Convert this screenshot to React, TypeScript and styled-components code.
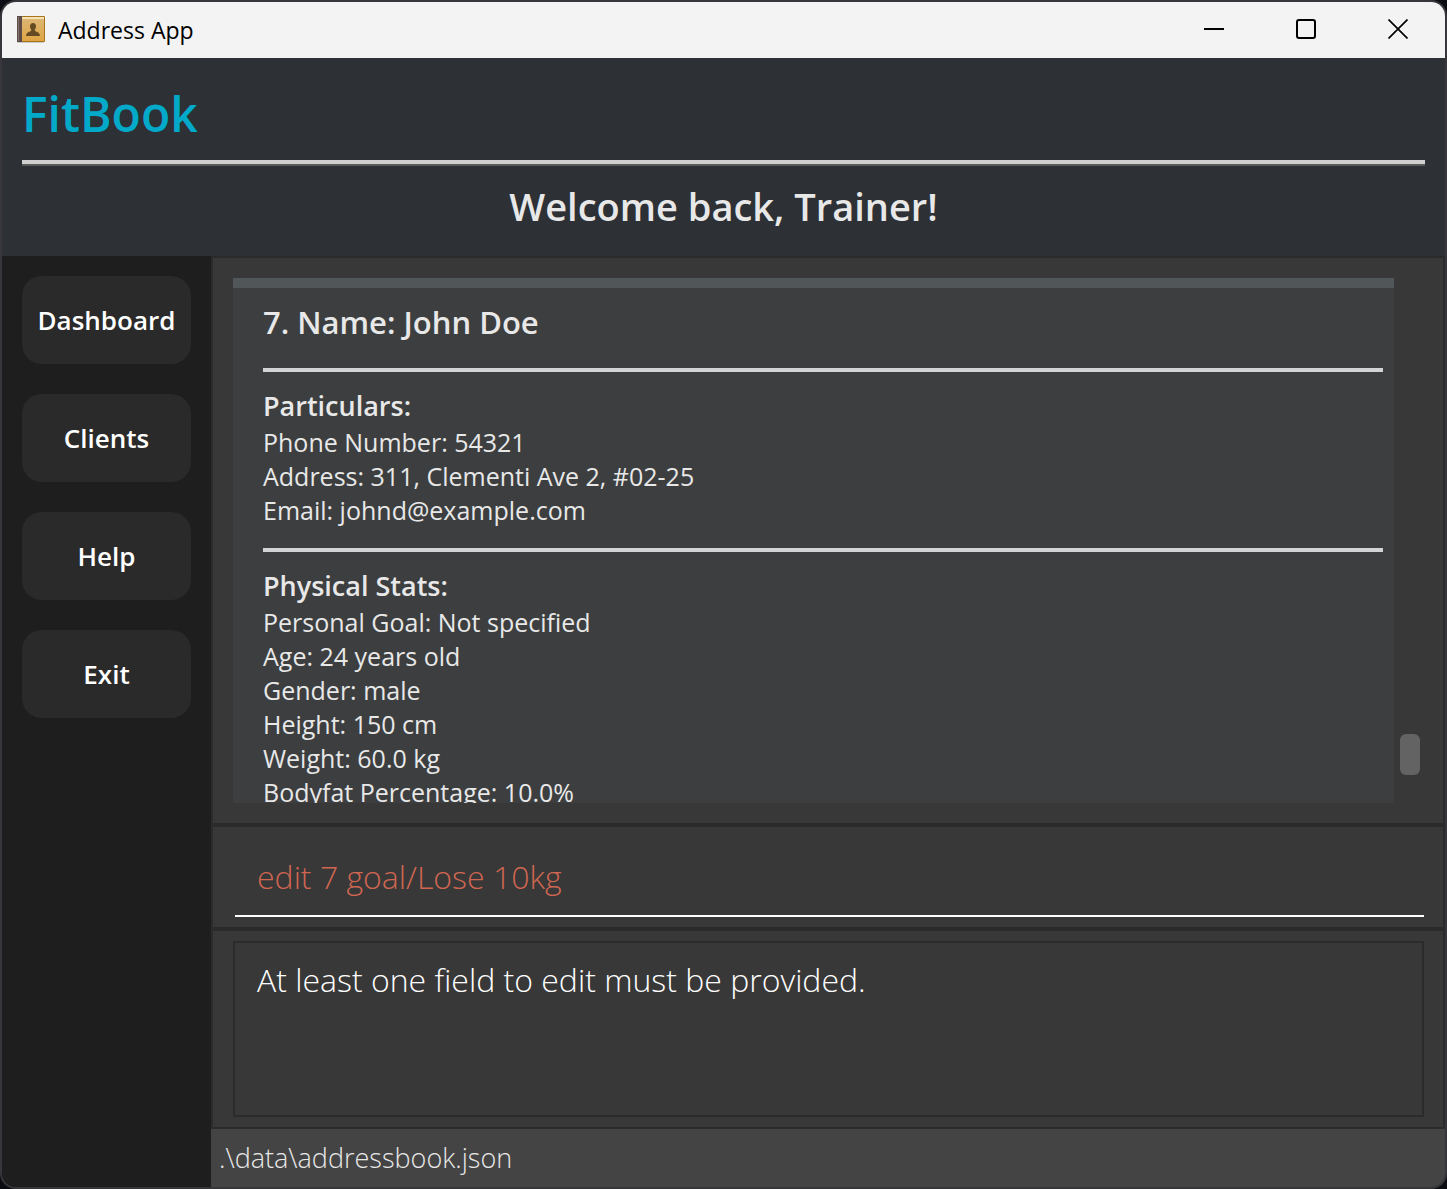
import React, { useState } from "react";
import styled, { createGlobalStyle } from "styled-components";

const GlobalStyle = createGlobalStyle`
  *, *::before, *::after { box-sizing: border-box; }
  body {
    margin: 0;
    background: #0b0d12;
    font-family: "Open Sans", "Noto Sans", sans-serif;
    color: #e8e8e8;
  }
  h1, h2, h3, h4, p, ul { margin: 0; padding: 0; font-weight: 400; }
`;

const Window = styled.div`
  display: flex;
  flex-direction: column;
  height: 100vh;
  min-height: 720px;
  border: 2px solid #37373b;
  border-radius: 16px;
  overflow: hidden;
  background: #1e1e1e;
`;

const TitleBar = styled.header`
  display: flex;
  align-items: center;
  flex: none;
  height: 56px;
  padding: 0 1px 0 14px;
  gap: 12px;
  background: #f3f3f3;
  color: #000;
`;

const AppTitle = styled.span`
  flex: 1;
  font-size: 23px;
  line-height: 56px;
`;

const WindowButtons = styled.div`
  display: flex;
`;

const WindowButton = styled.button`
  display: flex;
  align-items: center;
  justify-content: center;
  width: 92px;
  height: 56px;
  padding: 0 0 2px;
  border: 0;
  background: transparent;
  color: #000;
`;

const Hero = styled.section`
  flex: none;
  height: 198px;
  padding: 20px;
  background: #2d3035;
`;

const Brand = styled.h1`
  font-size: 48px;
  font-weight: 600;
  line-height: 72px;
  color: #03a9c9;
`;

const HeroRule = styled.div`
  height: 6px;
  margin-top: 10px;
  background: #d0d0d0;
  border-bottom: 2px solid #5a5a5a;
`;

const Welcome = styled.h2`
  margin-top: 10px;
  font-size: 38px;
  font-weight: 600;
  line-height: 60px;
  text-align: center;
`;

const Body = styled.div`
  display: flex;
  flex: 1;
  min-height: 0;
`;

const Sidebar = styled.nav`
  display: flex;
  flex-direction: column;
  flex: none;
  gap: 30px;
  width: 209px;
  padding: 20px;
  background: #1e1e1e;
`;

const NavButton = styled.button`
  height: 88px;
  padding: 0 0 1px;
  border: 0;
  border-radius: 20px;
  background: #2a2a2a;
  color: #fff;
  font-family: inherit;
  font-size: 26px;
  font-weight: 600;
`;

const Main = styled.main`
  display: flex;
  flex-direction: column;
  flex: 1;
  min-width: 0;
  background: #383838;
`;

const Pane = styled.section<{ $grow?: boolean; $pad: string }>`
  display: flex;
  flex: ${(p) => (p.$grow ? "1" : "none")};
  min-height: 0;
  padding: ${(p) => p.$pad};
  border: 2px solid #2b2b2b;
`;

const ListView = styled.div`
  flex: 1;
  min-width: 0;
  overflow: hidden;
  background: #3c3e3f;
`;

const PreviousCard = styled.div`
  height: 10px;
  background: #515658;
`;

const Card = styled.article`
  padding: 10px 11px 0 30px;
`;

const CardName = styled.h3`
  font-size: 31px;
  font-weight: 600;
  line-height: 49px;
`;

const CardRule = styled.hr`
  height: 4px;
  margin: 21px 0 14px;
  border: 0;
  background: #d3d3d3;
`;

const GroupTitle = styled.h4`
  font-size: 27px;
  font-weight: 600;
  line-height: 39px;
`;

const Field = styled.p`
  font-size: 25px;
  line-height: 34px;
`;

const ScrollBar = styled.div`
  display: flex;
  flex-direction: column;
  justify-content: flex-end;
  flex: none;
  width: 29px;
  padding: 0 3px 28px 6px;
`;

const Thumb = styled.div`
  height: 41px;
  border-radius: 6px;
  background: #636363;
`;

const CommandInput = styled.input`
  flex: 1;
  min-width: 0;
  height: 80px;
  margin: 0 0 0 2px;
  padding: 0 22px;
  border: 0;
  border-bottom: 2px solid #fff;
  outline: none;
  background: transparent;
  color: #d06651;
  font-family: inherit;
  font-size: 32px;
  font-weight: 300;
`;

const Result = styled.output`
  flex: 1;
  height: 176px;
  padding: 12px 22px;
  border: 2px solid #2b2b2b;
  color: #fff;
  font-size: 32px;
  font-weight: 300;
  line-height: 50px;
`;

const StatusBar = styled.footer`
  flex: none;
  height: 58px;
  padding: 0 8px;
  background: #444;
  font-size: 27px;
  font-weight: 300;
  line-height: 58px;
`;

const BookIcon = () => (
  <svg width="30" height="30" viewBox="0 0 30 30" aria-hidden="true">
    <defs>
      <linearGradient id="cover" x1="0" y1="0" x2="0" y2="1">
        <stop offset="0" stopColor="#dcb673" />
        <stop offset="1" stopColor="#e0a545" />
      </linearGradient>
    </defs>
    <rect x="1" y="25" width="27" height="3" rx="1" fill="#c9c9c9" />
    <rect x="1" y="1" width="28" height="26" rx="1" fill="#a8741c" />
    <rect x="2" y="2" width="26" height="2" fill="#f6e3b5" />
    <rect x="6" y="4" width="22" height="22" fill="url(#cover)" />
    <rect x="1" y="1" width="5" height="26" fill="#5d4b48" />
    <rect x="2" y="2" width="1" height="24" fill="#86736d" />
    <path
      d="M17 8c2 0 3 1.300 3 3.200 0 1.600-.6 2.600-1.200 3.400v1.200c.8.900 5.200 1.400 5.200 5.200H10c0-3.800 4.400-4.300 5.200-5.200v-1.200C14.600 13.800 14 12.800 14 11.200 14 9.300 15 8 17 8z"
      fill="#654a25"
    />
  </svg>
);

const particulars = [
  "Phone Number: 54321",
  "Address: 311, Clementi Ave 2, #02-25",
  "Email: johnd@example.com",
];

const stats = [
  "Personal Goal: Not specified",
  "Age: 24 years old",
  "Gender: male",
  "Height: 150 cm",
  "Weight: 60.0 kg",
  "Bodyfat Percentage: 10.0%",
];

export default function App() {
  const [command, setCommand] = useState("edit 7 goal/Lose 10kg");
  return (
    <>
      <GlobalStyle />
      <Window>
        <TitleBar>
          <BookIcon />
          <AppTitle>Address App</AppTitle>
          <WindowButtons>
            <WindowButton aria-label="Minimize">
              <svg width="20" height="20" viewBox="0 0 20 20">
                <path d="M0 10h20" stroke="currentColor" strokeWidth="2" />
              </svg>
            </WindowButton>
            <WindowButton aria-label="Maximize">
              <svg width="20" height="20" viewBox="0 0 20 20">
                <rect x="1" y="1" width="18" height="18" rx="2" fill="none" stroke="currentColor" strokeWidth="2" />
              </svg>
            </WindowButton>
            <WindowButton aria-label="Close">
              <svg width="20" height="20" viewBox="0 0 20 20">
                <path d="M0.500 0.500l19 19M19.500 0.500l-19 19" stroke="currentColor" strokeWidth="1.700" />
              </svg>
            </WindowButton>
          </WindowButtons>
        </TitleBar>
        <Hero>
          <Brand>FitBook</Brand>
          <HeroRule />
          <Welcome>Welcome back, Trainer!</Welcome>
        </Hero>
        <Body>
          <Sidebar>
            {["Dashboard", "Clients", "Help", "Exit"].map((label) => (
              <NavButton key={label}>{label}</NavButton>
            ))}
          </Sidebar>
          <Main>
            <Pane $grow $pad="20px">
              <ListView>
                <PreviousCard />
                <Card>
                  <CardName>7. Name: John Doe</CardName>
                  <CardRule />
                  <GroupTitle>Particulars:</GroupTitle>
                  {particulars.map((line) => (
                    <Field key={line}>{line}</Field>
                  ))}
                  <CardRule />
                  <GroupTitle>Physical Stats:</GroupTitle>
                  {stats.map((line) => (
                    <Field key={line}>{line}</Field>
                  ))}
                </Card>
              </ListView>
              <ScrollBar>
                <Thumb />
              </ScrollBar>
            </Pane>
            <Pane $pad="10px 19px 10px 20px">
              <CommandInput
                aria-label="Command"
                value={command}
                spellCheck={false}
                onChange={(e) => setCommand(e.target.value)}
              />
            </Pane>
            <Pane $pad="10px 19px 10px 20px">
              <Result>At least one field to edit must be provided.</Result>
            </Pane>
            <StatusBar>.\data\addressbook.json</StatusBar>
          </Main>
        </Body>
      </Window>
    </>
  );
}
